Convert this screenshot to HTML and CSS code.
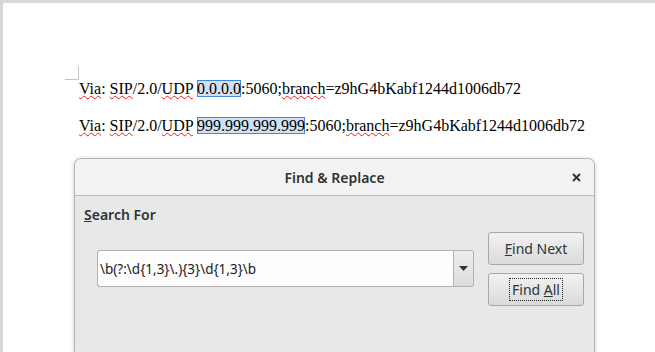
FILE: index.html
```html
<!DOCTYPE html>
<html>
<head>
<meta charset="utf-8">
<link rel="stylesheet" href="styles.css">
</head>
<body>
<div class="page">
  <div class="corner"></div>
  <div class="doc">
    <p class="line"><span class="err">Via</span>: <span class="err">SIP</span>/2.0/<span class="err">UDP</span> <span class="sel">0.0.0.0</span>:5060;<span class="err">branch</span>=z9hG4bKabf1244d1006db72</p>
    <p class="line"><span class="err">Via</span>: <span class="err">SIP</span>/2.0/<span class="err">UDP</span> <span class="sel">999.999.999.999</span>:5060;<span class="err">branch</span>=z9hG4bKabf1244d1006db72</p>
  </div>
</div>
<div class="dialog">
  <div class="titlebar">
    <span></span>
    <span class="title">Find &amp; Replace</span>
    <span class="close"><svg width="9" height="9" viewBox="0 0 9 9"><path d="M1 1L8 8M8 1L1 8" stroke="#2e3436" stroke-width="2" fill="none"/></svg></span>
  </div>
  <div class="dbody">
    <div class="left">
      <div class="label"><u>S</u>earch For</div>
      <div class="combo">
        <div class="entry">\b(?:\d{1,3}\.){3}\d{1,3}\b</div>
        <div class="arrow"><svg width="9" height="5" viewBox="0 0 9 5"><path d="M0 0H9L4.5 5Z" fill="#2e3436"/></svg></div>
      </div>
    </div>
    <div class="right">
      <button class="btn"><span><u>F</u>ind Next</span></button>
      <button class="btn"><span class="focus">Find <u>A</u>ll</span></button>
    </div>
  </div>
</div>
</body>
</html>
```

FILE: styles.css
```css
* { box-sizing: border-box; }
html, body { margin: 0; }
body {
  width: 655px;
  height: 352px;
  overflow: hidden;
  position: relative;
  background: #fff;
}
.page {
  height: 352px;
  border-top: 3px solid #d9d9d9;
  border-left: 3px solid #d6d6d6;
  background: #fff;
  padding: 77px 0 0 76px;
  position: relative;
  font-family: "Liberation Serif", serif;
  font-size: 16px;
  color: #000;
}
.corner {
  position: absolute;
  left: 62px;
  top: 63px;
  width: 14px;
  height: 14px;
  border-right: 1px solid #c4c4c4;
  border-bottom: 1px solid #c4c4c4;
}
.line {
  margin: 0 0 19px;
  line-height: 18px;
  white-space: nowrap;
}
.err {
  text-decoration: underline wavy #e0201b;
  text-decoration-thickness: 1px;
  text-underline-offset: 1px;
}
.sel {
  background: #d0e1f5;
  box-shadow: inset 0 0 0 1px #418ad8;
}
.dialog {
  position: absolute;
  left: 74px;
  top: 158px;
  width: 521px;
  height: 194px;
  border: 1px solid #b4b4b4;
  border-bottom: none;
  border-radius: 7px 7px 0 0;
  background: #e8e8e8;
  box-shadow: 0 1px 4px rgba(0,0,0,0.22);
  font-family: "Noto Sans", sans-serif;
  color: #2e3436;
  overflow: hidden;
}
.titlebar {
  height: 37px;
  background: #f3f3f3;
  border-bottom: 1px solid #bebebe;
  display: grid;
  grid-template-columns: 1fr auto 1fr;
  align-items: center;
}
.title {
  font-size: 14px;
  font-weight: 600;
}
.close {
  justify-self: end;
  margin-right: 13px;
  display: flex;
}
.dbody {
  display: flex;
  padding: 11px 10px 0 9px;
}
.left { flex: 1; }
.label {
  font-size: 14px;
  font-weight: 600;
  line-height: 16px;
}
.combo {
  margin: 27px 14px 0 13px;
  height: 37px;
  display: flex;
}
.entry {
  flex: 1;
  background: #fdfdfd;
  border: 1px solid #b3b3b3;
  border-right: none;
  border-radius: 3px 0 0 3px;
  font-family: "Noto Sans", sans-serif;
  font-size: 13.5px;
  color: #1a1a1a;
  padding-left: 2px;
  display: flex;
  align-items: center;
}
.arrow {
  width: 21px;
  border: 1px solid #b3b3b3;
  border-radius: 0 3px 3px 0;
  background: linear-gradient(#ececec, #dddddd);
  display: flex;
  align-items: center;
  justify-content: center;
}
.right {
  display: flex;
  flex-direction: column;
  gap: 8px;
  margin-top: 25px;
}
.btn {
  width: 96px;
  height: 33px;
  border: 1px solid #a8a8a8;
  border-radius: 3px;
  background: linear-gradient(#f2f2f2, #dadada);
  font-family: "Noto Sans", sans-serif;
  font-size: 14px;
  color: #2e3436;
  padding: 0;
  display: flex;
  align-items: center;
  justify-content: center;
}
.focus {
  outline: 1px dotted #222;
  outline-offset: 1px;
  padding: 0 1px;
}
```
